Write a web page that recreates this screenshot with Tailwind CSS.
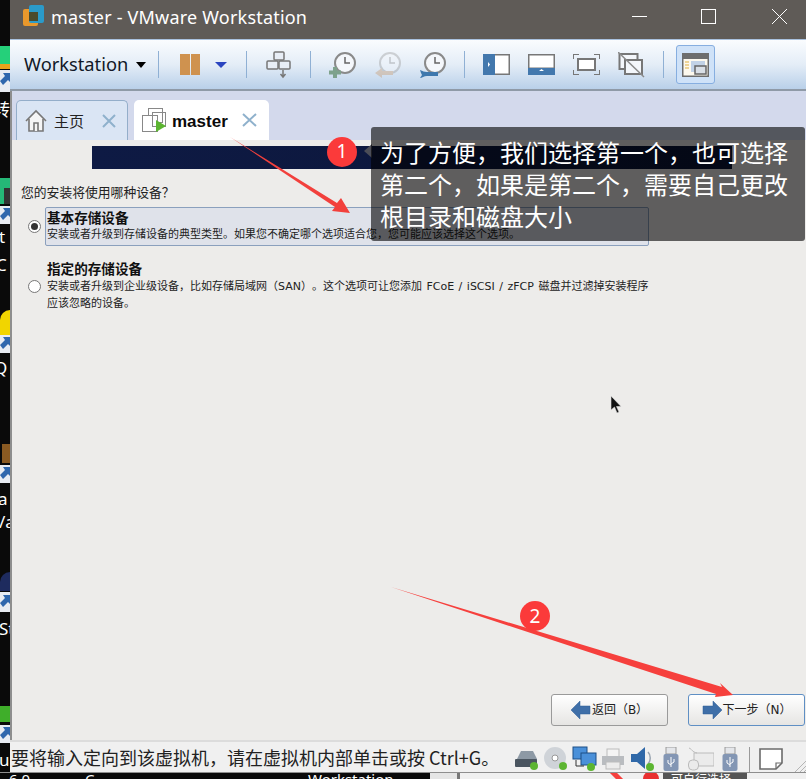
<!DOCTYPE html>
<html lang="zh">
<head>
  <meta charset="UTF-8">
  <title>master - VMware Workstation</title>
  <script src="https://cdn.jsdelivr.net/npm/@tailwindcss/browser@4"></script>
</head>
<body class="w-[806px] h-[779px] overflow-hidden bg-[#0a0a0a] relative font-['Noto_Sans','Noto_Sans_CJK_SC',sans-serif]">

<div class="flex h-[772px]">
  <!-- desktop strip on the left -->
  <div class="w-[10px] shrink-0 bg-[#0a0a0a] relative overflow-hidden text-white text-[17px] leading-[20px]">
    <div class="absolute left-0 top-[46px] w-[10px] h-[18px] bg-[#25d07a]"></div>
    <div class="absolute left-0 top-[64px] w-[10px] h-[5px] bg-[#e8a21c]"></div>
    <svg class="absolute left-0 top-[70px]" width="10" height="22" viewBox="0 0 10 22"><rect width="10" height="22" fill="#e8ecf2"/><path d="M10 3H3l2 3-5 5 3 4 5-5 2 2z" fill="#2f67ad"/></svg>
    <div class="absolute -left-[7px] top-[99px] font-['Noto_Sans_CJK_SC',sans-serif]">转</div>
    <div class="absolute left-0 top-[178px] w-[10px] h-[26px] bg-[#25b877]"></div>
    <div class="absolute left-[4px] top-[188px] w-[6px] h-[16px] bg-[#333]"></div>
    <svg class="absolute left-0 top-[206px]" width="10" height="18" viewBox="0 0 10 18"><rect width="10" height="18" fill="#e8ecf2"/><path d="M10 2H3l2 3-5 5 3 4 5-5 2 2z" fill="#2f67ad"/></svg>
    <div class="absolute -left-[1px] top-[227px]">t</div>
    <div class="absolute -left-[4px] top-[255px]">C</div>
    <div class="absolute left-0 top-[310px] w-[10px] h-[25px] bg-[#f1d500] rounded-tl-[10px]"></div>
    <svg class="absolute left-0 top-[335px]" width="10" height="18" viewBox="0 0 10 18"><rect width="10" height="18" fill="#e8ecf2"/><path d="M10 2H3l2 3-5 5 3 4 5-5 2 2z" fill="#2f67ad"/></svg>
    <div class="absolute -left-[6px] top-[358px]">Q</div>
    <div class="absolute left-[2px] top-[444px] w-[8px] h-[19px] bg-[#8a5a22]"></div>
    <svg class="absolute left-0 top-[465px]" width="10" height="18" viewBox="0 0 10 18"><rect width="10" height="18" fill="#e8ecf2"/><path d="M10 2H3l2 3-5 5 3 4 5-5 2 2z" fill="#2f67ad"/></svg>
    <div class="absolute -left-[2px] top-[489px]">a</div>
    <div class="absolute -left-[1px] top-[512px]">/a</div>
    <div class="absolute left-0 top-[572px] w-[10px] h-[19px] bg-[#1e2b5e] rounded-tl-[10px]"></div>
    <svg class="absolute left-0 top-[592px]" width="10" height="20" viewBox="0 0 10 20"><rect width="10" height="20" fill="#e8ecf2"/><path d="M10 3H3l2 3-5 5 3 4 5-5 2 2z" fill="#2f67ad"/></svg>
    <div class="absolute -left-[1px] top-[619px]">St</div>
    <div class="absolute left-0 top-[706px] w-[10px] h-[16px] bg-[#3fae2a]"></div>
    <svg class="absolute left-0 top-[725px]" width="10" height="18" viewBox="0 0 10 18"><rect width="10" height="18" fill="#e8ecf2"/><path d="M10 2H3l2 3-5 5 3 4 5-5 2 2z" fill="#2f67ad"/></svg>
    <div class="absolute -left-[1px] top-[750px]">u</div>
  </div>

  <!-- window -->
  <div class="w-[796px] shrink-0 flex flex-col h-[772px]">
    <!-- title bar -->
    <div class="h-[39px] shrink-0 bg-[#5f5b57] flex items-start text-white">
      <svg class="ml-[13px] mt-[5px]" width="21" height="22" viewBox="0 0 21 22">
        <rect x="0" y="4" width="15" height="17" rx="2" fill="#e9982c"/>
        <rect x="6" y="0" width="15" height="18" rx="2" fill="#2b9ac9"/>
        <rect x="6" y="7" width="9" height="9" fill="#4a4a2c"/>
      </svg>
      <span class="ml-[7px] mt-[7px] text-[18px] leading-[20px] tracking-[0.2px]">master - VMware Workstation</span>
      <svg class="ml-auto" width="174" height="33" viewBox="0 0 174 33" fill="none" stroke="#fff" stroke-width="1">
        <path d="M0 16.500h15"/>
        <rect x="69.500" y="9.500" width="14" height="14"/>
        <path d="M140 9l15 15M155 9l-15 15"/>
      </svg>
    </div>

    <!-- toolbar -->
    <div class="h-[52px] shrink-0 bg-gradient-to-b from-[#fafcfe] via-[#e4edf7] to-[#b9d0e9] border-t border-[#a9c1de] border-b-2 border-b-[#8f9aa7] flex items-center">
      <span class="ml-[14px] text-[18.300px] leading-none text-[#111827]">Workstation</span>
      <span class="ml-[8px] w-0 h-0 border-x-[5.500px] border-x-transparent border-t-[6px] border-t-black"></span>
      <span class="ml-[12px] w-px h-[27px] bg-[#8fb0d4]"></span>
      <span class="ml-[21px] flex gap-px"><i class="block w-[10px] h-[21px] bg-[#cf924f]"></i><i class="block w-[9px] h-[21px] bg-[#cf924f]"></i></span>
      <span class="ml-[15px] w-0 h-0 border-x-[6px] border-x-transparent border-t-[6px] border-t-[#2a45c0]"></span>
      <span class="ml-[19px] w-px h-[27px] bg-[#8fb0d4]"></span>
      <svg class="ml-[19px]" width="25" height="28" viewBox="0 0 25 28" fill="#e8eef6" stroke="#777" stroke-width="1.500">
        <rect x="8" y="1" width="10" height="8" rx="1"/><rect x="1" y="10" width="11" height="8" rx="1"/><rect x="13" y="10" width="11" height="8" rx="1"/>
        <path d="M17 19v6M14.500 23l2.500 3 2.500-3" fill="none"/>
      </svg>
      <span class="ml-[19px] w-px h-[27px] bg-[#8fb0d4]"></span>
      <svg class="ml-[18px]" width="27" height="28" viewBox="0 0 27 28" fill="none">
        <circle cx="16" cy="12" r="10" fill="#f4f7fb" stroke="#8a8a8a" stroke-width="2"/>
        <path d="M16 6v6h5" stroke="#666" stroke-width="1.500"/>
        <path d="M6 16v11M0 21.500h12" stroke="#7ea28c" stroke-width="4"/>
      </svg>
      <svg class="ml-[19px] opacity-40" width="26" height="28" viewBox="0 0 26 28" fill="none">
        <circle cx="15" cy="12" r="10" fill="#f4f7fb" stroke="#9a9a9a" stroke-width="2"/>
        <path d="M15 6v6h5" stroke="#888" stroke-width="1.500"/>
        <path d="M0 22l7-5v3h11v4H7v3z" fill="#c99a6e"/>
      </svg>
      <svg class="ml-[18px]" width="27" height="28" viewBox="0 0 27 28" fill="none">
        <circle cx="16" cy="12" r="10" fill="#f4f7fb" stroke="#8a8a8a" stroke-width="2"/>
        <path d="M16 6v6h5" stroke="#666" stroke-width="1.500"/>
        <path d="M1 19c3 1 4 2 7 2h11v4H8c-3 0-5 2-7 2l2-3-1-2z" fill="#3f78ad"/>
      </svg>
      <span class="ml-[18px] w-px h-[27px] bg-[#8fb0d4]"></span>
      <svg class="ml-[18px]" width="27" height="21" viewBox="0 0 27 21">
        <rect width="27" height="21" fill="#777"/><rect x="0" width="12" height="21" fill="#4378ad"/><rect x="12" y="1.500" width="13.500" height="18" fill="#fff"/><path d="M5 8l2 2.500L5 13z" fill="#fff"/>
      </svg>
      <svg class="ml-[18px]" width="27" height="21" viewBox="0 0 27 21">
        <rect width="27" height="21" fill="#777"/><rect x="1.500" y="1.500" width="24" height="12" fill="#fff"/><rect y="14" width="27" height="7" fill="#4378ad"/><path d="M11 17l2.500-2 2.500 2z" fill="#fff"/>
      </svg>
      <svg class="ml-[18px]" width="27" height="21" viewBox="0 0 27 21" fill="none">
        <rect x="5" y="5" width="17" height="11" fill="#fff" stroke="#777" stroke-width="2"/>
        <path d="M0 5V0h6M21 0h6v5M0 16v5h6M21 21h6v-5" stroke="#777" stroke-width="2"/>
      </svg>
      <svg class="ml-[18px]" width="27" height="26" viewBox="0 0 27 26" fill="none">
        <rect x="1.500" y="2" width="18" height="15" fill="#f4f7fb" stroke="#777" stroke-width="2"/>
        <rect x="7" y="8" width="17" height="14" fill="#f4f7fb" stroke="#777" stroke-width="2"/>
        <path d="M0 0l26 25" stroke="#8a8a8a" stroke-width="1.500"/>
      </svg>
      <span class="ml-[18px] w-px h-[27px] bg-[#8fb0d4]"></span>
      <span class="ml-[12px] w-[39px] h-[39px] rounded-[3px] bg-[#cfe2f8] border border-[#86aee0] flex items-center justify-center">
        <svg width="27" height="24" viewBox="0 0 27 24">
          <rect width="27" height="24" fill="#6d6d6d"/><rect x="1.500" y="6" width="24" height="16.500" fill="#fdf9ee"/>
          <path d="M3 9h4M3 12h4M3 15h4" stroke="#e0b040" stroke-width="1.200"/>
          <rect x="9" y="8" width="14" height="11" fill="#c2d2e6"/><rect x="13" y="13" width="11" height="8" fill="#d9dfe6" stroke="#666" stroke-width="1.500"/>
        </svg>
      </span>
    </div>

    <!-- tabs -->
    <div class="h-[49px] shrink-0 bg-[#d3d9ec] border-l-2 border-[#8e8e8e] flex items-end pl-[4px] gap-[6px]">
      <div class="w-[112px] h-[40px] bg-[#dae5f4] border border-b-0 border-[#94aeca] rounded-t-[5px] flex items-center pl-[8px]">
        <svg width="22" height="23" viewBox="0 0 22 23" fill="#f5f5f5" stroke="#777" stroke-width="1.600">
          <path d="M1 12L11 2l10 10"/><path d="M4 10v12h14V10"/><path d="M9 22v-8h4v8"/>
        </svg>
        <span class="ml-[7px] text-[15px] leading-none text-[#222] font-['Noto_Sans_CJK_SC',sans-serif]">主页</span>
        <svg class="ml-[18px]" width="14" height="14" viewBox="0 0 14 14" stroke="#8fb1cc" stroke-width="2"><path d="M1 1l12 12M13 1L1 13"/></svg>
      </div>
      <div class="w-[135px] h-[40px] bg-white rounded-t-[5px] flex items-center pl-[8px]">
        <svg width="24" height="25" viewBox="0 0 24 25" fill="none" stroke="#888" stroke-width="1">
          <rect x="6.500" y="0.500" width="14" height="14" fill="#fff"/><rect x="0.500" y="7.500" width="15" height="16" fill="#fff"/><rect x="10.500" y="4.500" width="13" height="14"/>
          <path d="M14 12l10 6-10 6z" fill="#5cb531" stroke="none"/>
        </svg>
        <span class="ml-[6px] mt-[2px] text-[17px] leading-none font-bold text-[#0a0a0a] font-['Liberation_Sans',sans-serif]">master</span>
        <svg class="ml-[14px]" width="15" height="14" viewBox="0 0 15 14" stroke="#8fb1cc" stroke-width="2"><path d="M1 1l13 12M14 1L1 13"/></svg>
      </div>
    </div>

    <!-- guest screen -->
    <div class="flex-1 bg-[#edecea] border-l-2 border-[#8e8e8e] flex flex-col text-[#222] [text-spacing-trim:space-all] font-['DejaVu_Sans','Noto_Sans_CJK_SC',sans-serif]">
      <div class="h-[31px] shrink-0 pt-[6px] pl-[80px]">
        <div class="w-[640px] h-[23px] bg-gradient-to-r from-[#0e1a44] to-[#0c1638]"></div>
      </div>
      <div class="pl-[9px] pt-[14px] text-[12.800px] leading-[14px] font-['Noto_Sans_CJK_SC',sans-serif]">您的安装将使用哪种设备？</div>

      <div class="ml-[16px] mt-[8px] flex items-center">
        <span class="w-[13px] h-[13px] rounded-full bg-white border border-[#777] flex items-center justify-center"><i class="block w-[7px] h-[7px] rounded-full bg-[#333]"></i></span>
        <div class="ml-[4px] w-[604px] h-[39px] bg-[#dfe2ea] border border-[#8ba0bd] rounded-[2px] pl-[1px] pt-[2px]">
          <div class="text-[13.600px] leading-[16px] font-bold text-[#111]">基本存储设备</div>
          <div class="text-[11px] leading-[18px] whitespace-nowrap">安装或者升级到存储设备的典型类型。如果您不确定哪个选项适合您，您可能应该选择这个选项。</div>
        </div>
      </div>

      <div class="ml-[16px] mt-[15px] flex items-center">
        <span class="w-[13px] h-[13px] rounded-full bg-white border border-[#777]"></span>
        <div class="ml-[4px] pl-[2px]">
          <div class="text-[13.600px] leading-[17px] font-bold text-[#111]">指定的存储设备</div>
          <div class="text-[11px] leading-[17px] whitespace-nowrap [word-spacing:1px]">安装或者升级到企业级设备，比如存储局域网（SAN）。这个选项可让您添加 FCoE / iSCSI / zFCP 磁盘并过滤掉安装程序<br>应该忽略的设备。</div>
        </div>
      </div>

      <!-- buttons -->
      <div class="mt-auto h-[46px] shrink-0 flex justify-end items-start gap-[20px] pr-[1px] text-[12px]">
        <button class="w-[117px] h-[32px] bg-gradient-to-b from-white to-[#e6e5e3] border border-[#9a9a9a] rounded-[3px] flex items-center justify-center gap-[1px]">
          <svg width="20" height="20" viewBox="0 0 20 20"><path d="M0 10l9-9v5h10v8H9v5z" fill="#3f6fa8" stroke="#2f5d94" stroke-width="0.500"/></svg>
          返回（B）
        </button>
        <button class="w-[117px] h-[32px] bg-gradient-to-b from-white to-[#e6e5e3] border border-[#5f8fc4] rounded-[3px] flex items-center justify-center gap-[1px]">
          <svg width="20" height="20" viewBox="0 0 20 20"><path d="M20 10l-9-9v5H1v8h10v5z" fill="#3f6fa8" stroke="#2f5d94" stroke-width="0.500"/></svg>
          下一步（N）
        </button>
      </div>
    </div>

    <!-- status bar -->
    <div class="h-[32px] shrink-0 bg-[#f0f0f0] border-t-2 border-[#dcdcdc] flex items-center">
      <span class="ml-px text-[18px] leading-none text-[#222] font-['Noto_Sans_CJK_SC',sans-serif] whitespace-nowrap">要将输入定向到该虚拟机，请在虚拟机内部单击或按 Ctrl+G。</span>
      <div class="ml-auto h-full pt-[4px] flex items-center">
        <svg width="25" height="24" viewBox="0 0 25 24"><path d="M3 12l4-8h12l4 8v8H3z" fill="#8d99a5"/><rect x="1" y="12" width="22" height="8" rx="1" fill="#4a5560"/><circle cx="20" cy="19" r="4" fill="#5cb531"/></svg>
        <svg class="ml-[4px]" width="26" height="26" viewBox="0 0 26 26"><circle cx="12" cy="12" r="11" fill="#cfd3d8"/><circle cx="12" cy="12" r="3" fill="#fff" stroke="#999"/><circle cx="20" cy="20" r="4" fill="#5cb531"/></svg>
        <svg class="ml-[3px]" width="25" height="26" viewBox="0 0 25 26"><rect x="1" y="1" width="14" height="12" fill="#4a90d9" stroke="#1d4f86"/><rect x="9" y="7" width="15" height="12" fill="#4a90d9" stroke="#1d4f86"/><path d="M4 14v6h8" stroke="#333" fill="none"/><circle cx="19" cy="21" r="4" fill="#5cb531"/></svg>
        <svg class="ml-[4px]" width="24" height="24" viewBox="0 0 24 24"><rect x="6" y="2" width="12" height="8" fill="#f4f4f4" stroke="#bbb"/><rect x="1" y="9" width="22" height="9" fill="#b9bcc0"/><rect x="5" y="15" width="14" height="7" fill="#ececec" stroke="#bbb"/></svg>
        <svg class="ml-[5px]" width="25" height="26" viewBox="0 0 25 26"><path d="M1 8h6l8-7v22l-8-7H1z" fill="#2f68a8"/><path d="M18 6c3 3 3 9 0 12" stroke="#9aa5b1" fill="none" stroke-width="1.500"/><circle cx="20" cy="21" r="4" fill="#5cb531"/></svg>
        <svg class="ml-[8px]" width="16" height="25" viewBox="0 0 16 25"><rect x="3" y="0" width="10" height="7" fill="#e4e6ea" stroke="#999"/><rect x="0.500" y="7" width="15" height="17" rx="2" fill="#8396b4"/><path d="M8 10v10M5 13v3l3 2M11 12v3l-3 2" stroke="#fff" fill="none"/></svg>
        <svg class="ml-[9px]" width="26" height="24" viewBox="0 0 26 24" opacity="0.6"><rect x="6" y="6" width="20" height="13" fill="#e8e8e8" stroke="#999"/><rect x="0.500" y="13" width="10" height="10" rx="4" fill="#e8e8e8" stroke="#999"/><path d="M1 1c3 1 3 4 8 5" stroke="#999" fill="none"/></svg>
        <svg class="ml-[8px]" width="16" height="25" viewBox="0 0 16 25"><rect x="3" y="0" width="10" height="7" fill="#e4e6ea" stroke="#999"/><rect x="0.500" y="7" width="15" height="17" rx="2" fill="#8396b4"/><path d="M8 10v10M5 13v3l3 2M11 12v3l-3 2" stroke="#fff" fill="none"/></svg>
        <span class="ml-[11px] w-px h-[25px] bg-[#9a9a9a]"></span>
        <svg class="ml-[9px]" width="24" height="22" viewBox="0 0 24 22"><path d="M1 1h22v14l-6 6H1z" fill="#fff" stroke="#6b6b6b" stroke-width="1.600"/><path d="M23 15h-6v6" fill="none" stroke="#6b6b6b" stroke-width="1.200"/></svg>
        <svg class="ml-[12px] self-end" width="11" height="14" viewBox="0 0 11 14" stroke="#b5b5b5"><path d="M11 3L0 14M11 8l-6 6M11 12l-2 2"/></svg>
      </div>
    </div>
  </div>
</div>

<!-- desktop peeking out below the window -->
<div class="h-[7px] flex border-t border-[#8e8e8e] overflow-hidden text-[15px] leading-[15px] whitespace-nowrap">
  <div class="w-[430px] bg-[#0a0a0a] text-white relative">
    <span class="absolute left-[9px] -top-[1px]">6.0</span>
    <span class="absolute left-[85px] -top-[1px]">C</span>
    <span class="absolute left-[308px] -top-[1px]">Workstation</span>
  </div>
  <div class="w-[27px] bg-[#e5e5e5]"></div>
  <div class="w-[3px] bg-[#777]"></div>
  <div class="flex-1 bg-[#f0f0f0] relative">
    <span class="absolute left-[155px] -top-[6px] w-[5px] h-[20px] bg-[#f6403d] -rotate-45"></span>
    <span class="absolute left-[183px] -top-[2px] w-[16px] h-[16px] rounded-full bg-[#e83030]"></span>
    <span class="absolute left-[203px] top-0 w-[84px] h-[7px] bg-[#555] text-white text-[12px] leading-[12px] pl-[8px] font-['Noto_Sans_CJK_SC',sans-serif]">可自行选择</span>
  </div>
</div>

<!-- annotations drawn over the screenshot -->
<svg class="absolute left-0 top-0 pointer-events-none" width="806" height="779" viewBox="0 0 806 779">
  <path d="M230 137L337 203L341 198L350 213L332 211L335 207Z" fill="#f2403c"/>
  <path d="M391 587L722 687L720 683L733 695L715 697L716 694Z" fill="#f6403d"/>
  <circle cx="342" cy="152" r="15" fill="#fb3a3a"/>
  <circle cx="535" cy="616" r="15" fill="#fb3a3a"/>
  <path d="M364 151l8-7v14z" fill="#4b4d57"/>
  <path d="M611 396v14l3.500-3 2.500 6 2-1-2.500-5.500h4.500z" fill="#111" stroke="#ddd" stroke-width="0.600"/>
</svg>
<span class="absolute left-[336px] top-[140px] text-white text-[19px] leading-[22px] w-[12px] text-center">1</span>
<span class="absolute left-[529px] top-[605px] text-white text-[19px] leading-[22px] w-[12px] text-center">2</span>

<div class="absolute left-[371px] top-[127px] w-[434px] h-[114px] rounded-[3px] bg-black/60 text-white text-[24px] leading-[32px] pl-[9px] pt-[9px] font-['Noto_Sans_CJK_SC',sans-serif]">
  为了方便，我们选择第一个，也可选择<br>第二个，如果是第二个，需要自己更改<br>根目录和磁盘大小
</div>

</body>
</html>
